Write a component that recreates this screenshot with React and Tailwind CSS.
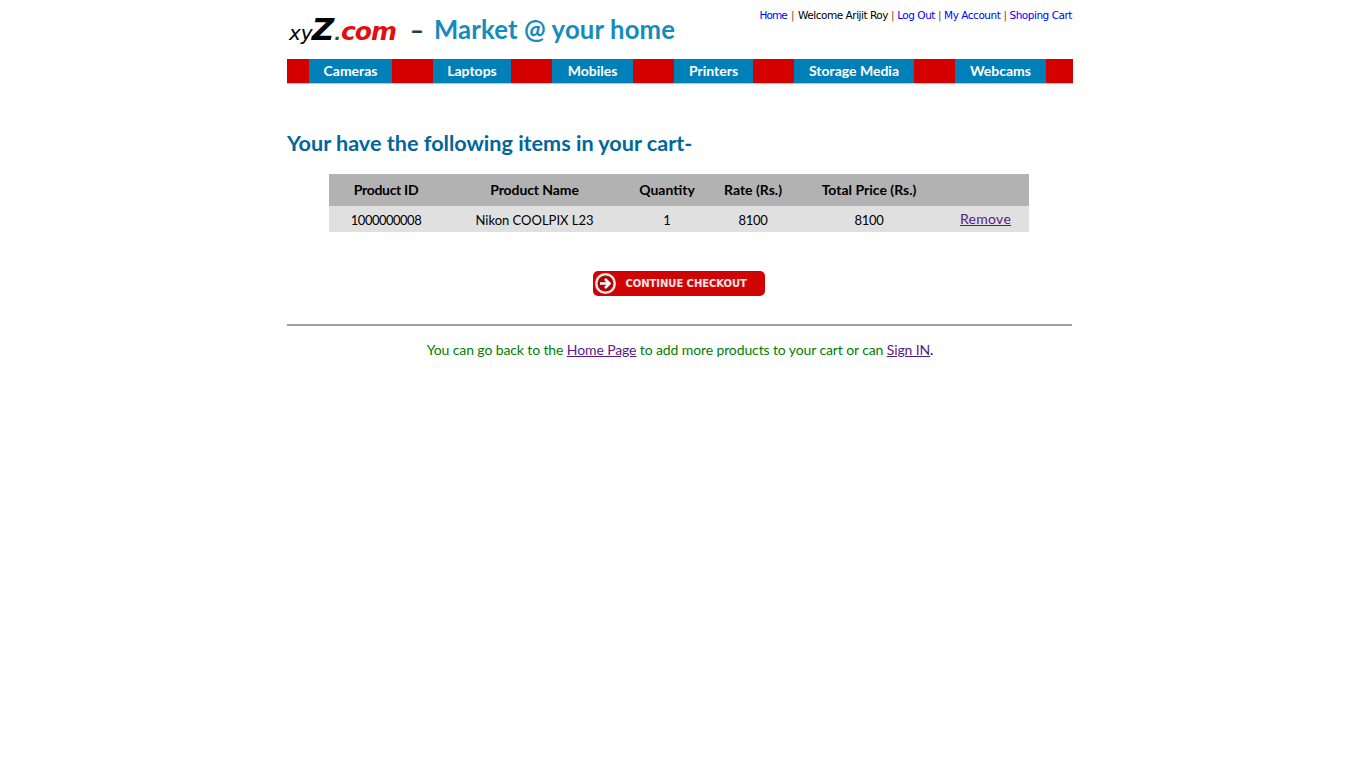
const nav = [
  ["Cameras", "ml-[22px] w-[83px]"],
  ["Laptops", "ml-[41px] w-[78px]"],
  ["Mobiles", "ml-[41px] w-[81px]"],
  ["Printers", "ml-[41px] w-[79px]"],
  ["Storage Media", "ml-[41px] w-[120px]"],
  ["Webcams", "ml-[41px] w-[91px]"],
];
const cols = "grid grid-cols-[114px_183px_82px_90px_142px_89px] items-center text-center";
const body = { fontFamily: "Lato, Carlito, 'Open Sans', sans-serif" };

export default function App() {
  return (
    <div className="min-h-[768px] bg-white" style={body}>
      <div className="mx-auto w-[786px]">
        <header className="flex h-[59px] justify-between">
          <div className="flex h-[59px] items-center">
            <span className="flex w-[123px] items-baseline italic leading-none" style={{ fontFamily: "'DejaVu Sans', sans-serif" }}>
              <span className="ml-[2px] text-[20px] font-medium text-black">xy</span>
              <span className="-ml-[1px] text-[31px] font-bold text-black">Z</span>
              <span className="text-[18px] font-bold text-[#1c5a1c]">.</span>
              <span className="text-[25px] font-bold tracking-[-1px] text-[#e01010]">com</span>
            </span>
            <span className="w-[24px] text-[24px] font-black leading-none text-[#1c4a1c]">–</span>
            <span className="text-[25.7px] font-bold leading-none tracking-[0.15px] text-[#168cbc]">Market @ your home</span>
          </div>
          <div className="whitespace-nowrap pr-[1px] pt-[9px] text-[10.5px] leading-[13px] text-black" style={{ fontFamily: "'DejaVu Sans', sans-serif", letterSpacing: "-0.47px" }}>
            <a className="tracking-[-0.9px] text-[#0000ff]">Home</a>
            <span className="mx-[4px] text-[#7a4a10]">|</span>
            Welcome Arijit Roy
            <span className="mx-[3px] text-[#7a4a10]">|</span>
            <a className="text-[#0000ff]">Log Out</a>
            <span className="mx-[3px] text-[#7a4a10]">|</span>
            <a className="text-[#0000ff]">My Account</a>
            <span className="mx-[3px] text-[#7a4a10]">|</span>
            <a className="text-[#0000ff]">Shoping Cart</a>
          </div>
        </header>

        <nav className="flex h-[25px] border-b border-[#c4c4c4] bg-[#d40000]">
          {nav.map(([label, cls]) => (
            <a key={label} className={`${cls} flex h-[24px] items-center justify-center bg-[#0080b8] pb-[2px] text-[14px] font-bold text-white`}>
              {label}
            </a>
          ))}
        </nav>

        <h1 className="mt-[44px] text-[21.6px] font-bold leading-[30px] text-[#00669c]">Your have the following items in your cart-</h1>

        <div className="ml-[42px] mt-[16px] w-[700px] text-black">
          <div className={`${cols} h-[32px] bg-[#b2b2b2] pb-[2px] text-[14px] font-bold`}>
            <div className="tracking-[-0.3px]">Product ID</div>
            <div className="tracking-[-0.1px]">Product Name</div>
            <div>Quantity</div>
            <div>Rate (Rs.)</div>
            <div>Total Price (Rs.)</div>
            <div></div>
          </div>
          <div className={`${cols} h-[26px] bg-[#e0e0e0] pt-[2px] text-[13px]`}>
            <div className="tracking-[-0.5px]">1000000008</div>
            <div>Nikon COOLPIX L23</div>
            <div>1</div>
            <div className="tracking-[-0.3px]">8100</div>
            <div className="tracking-[-0.3px]">8100</div>
            <a className="pb-[4px] pl-[2px] text-[14px] tracking-[0.3px] text-[#551a8b] underline">Remove</a>
          </div>
        </div>

        <div className="mt-[39px] flex justify-center">
          <button className="ml-[-3px] flex h-[25px] w-[172px] items-center rounded-[5px] bg-[#cf0505] pl-[1px]">
            <svg width="23" height="23" viewBox="0 0 23 23" className="shrink-0">
              <circle cx="11.5" cy="11.5" r="10.5" fill="#f4e4e4" />
              <circle cx="11.5" cy="11.5" r="8" fill="#a80808" />
              <path d="M6 11.5h9M11 7l4.5 4.5L11 16" fill="none" stroke="#fff" strokeWidth="2.6" />
            </svg>
            <span className="ml-[9px] whitespace-nowrap text-[10px] font-bold tracking-[-0.05px] text-[#f7e6e6]" style={{ fontFamily: "'DejaVu Sans', sans-serif" }}>CONTINUE CHECKOUT</span>
          </button>
        </div>

        <hr className="mt-[28px] w-[785px] border-0 border-t-2 border-[#a0a0a0]" />

        <p className="mt-[14px] text-center text-[14px] leading-[20px] tracking-[-0.115px] text-[#008000]">
          You can go back to the <a className="text-[#551a8b] underline">Home Page</a> to add more products to your cart or can <a className="text-[#551a8b] underline">Sign IN</a><span className="text-black">.</span>
        </p>
      </div>
    </div>
  );
}
